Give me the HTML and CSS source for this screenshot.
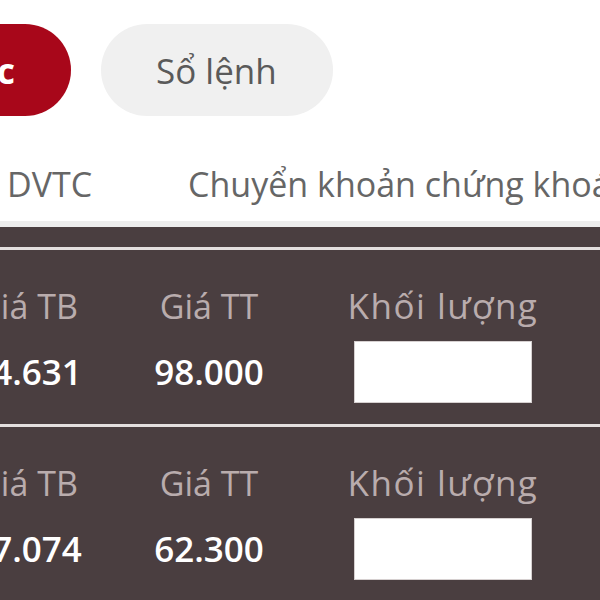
FILE: index.html
```html
<!DOCTYPE html>
<html>
<head>
    <meta charset="utf-8">
    <link rel="stylesheet" href="styles.css">
    <title>Danh mục</title>
</head>
<body>
    <div class="pills">
        <div class="pill pill-active">Danh mục</div>
        <div class="pill">Sổ lệnh</div>
    </div>

    <div class="subtabs">
        <span>DVTC</span>
        <span>Chuyển khoản chứng khoán</span>
    </div>

    <div class="holdings">
        <!-- mỗi mã một thẻ -->
        <div class="card">
            <div class="label">Giá TB</div>
            <div class="label">Giá TT</div>
            <div class="label label-wide">Khối lượng</div>
            <div class="value">84.631</div>
            <div class="value">98.000</div>
            <input class="qty" type="text">
        </div>
        <div class="card">
            <div class="label">Giá TB</div>
            <div class="label">Giá TT</div>
            <div class="label label-wide">Khối lượng</div>
            <div class="value">57.074</div>
            <div class="value">62.300</div>
            <input class="qty" type="text">
        </div>
    </div>
</body>
</html>
```

FILE: styles.css
```css
body {
    margin: 0;
    width: 600px;
    height: 600px;
    overflow: hidden;
    background-color: white;
    font-family: "Open Sans", "Noto Sans", sans-serif;
}

.pills {
    display: flex;
    gap: 30px;
    padding-top: 24px;
    margin-left: -189px;
}
.pill {
    height: 92px;
    border-radius: 46px;
    padding: 0 56px 0 55px;
    display: flex;
    align-items: center;
    font-size: 35px;
    color: #5a5a5a;
    background-color: #f0f0f0;
    white-space: nowrap;
}
.pill-active {
    width: 260px;
    box-sizing: border-box;
    justify-content: flex-end;
    padding-right: 56px;
    background-color: #a8071a;
    color: white;
    font-weight: 700;
}

.subtabs {
    display: flex;
    gap: 96px;
    margin-top: 48px;
    padding: 0 0 17px 7px;
    font-size: 34px;
    line-height: 40px;
    color: #666;
    white-space: nowrap;
    border-bottom: 6px solid #ededed;
}

.holdings {
    background-color: #4a3e40;
    padding-top: 20px;
    height: 400px;
}
.card {
    display: grid;
    grid-template-columns: 174px 190px 278px;
    row-gap: 15px;
    justify-items: center;
    align-items: center;
    margin-left: -60px;
    padding: 36px 0 21px;
    border-top: 3px solid #e4dfdf;
}
.card .label {
    font-size: 34px;
    line-height: 40px;
    color: #b9acad;
    white-space: nowrap;
}
.card .label-wide {
    font-size: 35px;
    letter-spacing: 1.5px;
}
.card .value {
    font-size: 35px;
    line-height: 40px;
    font-weight: 600;
    color: white;
}
.qty {
    width: 178px;
    height: 62px;
    box-sizing: border-box;
    border: 1px solid #d6d0d0;
    background-color: white;
}
```
